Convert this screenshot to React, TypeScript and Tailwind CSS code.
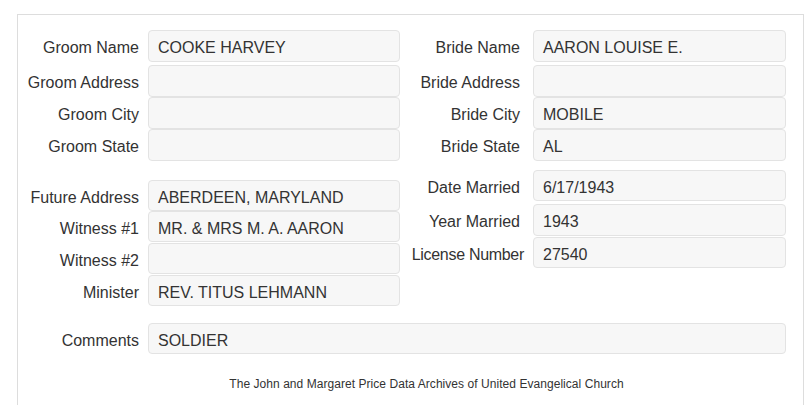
import type { FC } from "react";

type FieldProps = {
  label: string;
  value?: string;
  labelW: string;
  boxW: string;
  h?: string;
  className?: string;
  labelClass?: string;
};

const Field: FC<FieldProps> = ({ label, value = "", labelW, boxW, h = "h-[32px]", className = "", labelClass = "" }) => (
  <div className={`flex items-center ${className}`}>
    <div className={`${labelW} shrink-0 whitespace-nowrap text-right pt-[4px] ${labelClass}`}>{label}</div>
    <div
      className={`${boxW} ${h} shrink-0 flex items-center pl-[9px] pt-[4px] rounded-[4px] border border-[#e3e3e3] bg-[#f7f7f7] whitespace-nowrap`}
    >
      {value}
    </div>
  </div>
);

const L = "w-[130px] pr-[9px]";
const LB = "w-[252px]";
const R = "w-[133px] pr-[13px]";
const RB = "w-[253px]";

export default function App() {
  return (
    <div
      className="w-[805px] h-[405px] overflow-hidden bg-white text-[16px] text-[#333333]"
      style={{ fontFamily: '"Liberation Sans", Arial, sans-serif' }}
    >
      <div className="ml-[17px] mt-[14px] w-[787px] h-[420px] border border-[#dddddd] pt-[15px]">
        {/* names / places */}
        <div className="flex">
          <div className="w-[382px] flex flex-col">
            <Field label="Groom Name" value="COOKE HARVEY" labelW={L} boxW={LB} />
            <Field label="Groom Address" labelW={L} boxW={LB} className="mt-[3px]" />
            <Field label="Groom City" labelW={L} boxW={LB} />
            <Field label="Groom State" labelW={L} boxW={LB} />
            <Field label="Future Address" value="ABERDEEN, MARYLAND" labelW={L} boxW={LB} h="h-[31px]" className="mt-[19px]" />
            <Field label="Witness #1" value="MR. & MRS M. A. AARON" labelW={L} boxW={LB} h="h-[31px]" />
            <Field label="Witness #2" labelW={L} boxW={LB} h="h-[31px]" className="mt-[1px]" />
            <Field label="Minister" value="REV. TITUS LEHMANN" labelW={L} boxW={LB} h="h-[31px]" className="mt-[1px]" />
          </div>
          <div className="flex flex-col">
            <Field label="Bride Name" value="AARON LOUISE E." labelW={R} boxW={RB} />
            <Field label="Bride Address" labelW={R} boxW={RB} className="mt-[3px]" />
            <Field label="Bride City" value="MOBILE" labelW={R} boxW={RB} />
            <Field label="Bride State" value="AL" labelW={R} boxW={RB} />
            <Field label="Date Married" value="6/17/1943" labelW={R} boxW={RB} h="h-[31px]" className="mt-[9px]" />
            <Field label="Year Married" value="1943" labelW={R} boxW={RB} className="mt-[3px]" />
            <Field
              label="License Number"
              value="27540"
              labelW="w-[133px] pr-[9px]"
              labelClass="tracking-[-0.3px]"
              boxW={RB}
              h="h-[31px]"
              className="mt-[1px]"
            />
          </div>
        </div>

        {/* comments */}
        <Field label="Comments" value="SOLDIER" labelW={L} boxW="w-[638px]" h="h-[31px]" className="mt-[17px]" />

        <p className="mt-[22px] pl-[32px] text-center text-[12px] leading-[16px] tracking-[0.05px]">
          The John and Margaret Price Data Archives of United Evangelical Church
        </p>
      </div>
    </div>
  );
}
